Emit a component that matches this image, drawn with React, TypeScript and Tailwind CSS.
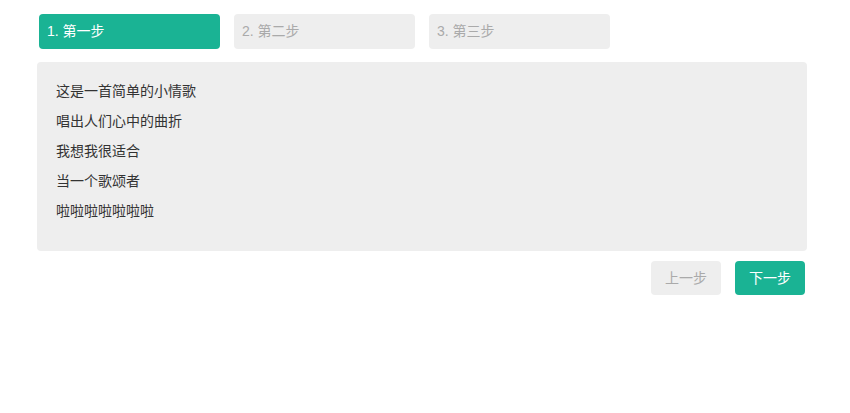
import React from "react";

export default function App() {
  const steps = ["1. 第一步", "2. 第二步", "3. 第三步"];
  const lines = ["这是一首简单的小情歌", "唱出人们心中的曲折", "我想我很适合", "当一个歌颂者", "啦啦啦啦啦啦啦"];
  return (
    <div
      className="w-[850px] h-[413px] bg-white text-[14px] text-[#333]"
      style={{ fontFamily: '"Liberation Sans", "Noto Sans CJK SC", sans-serif' }}
    >
      <div className="pt-[14px] pl-[37px] w-[807px]">
        <div className="flex gap-[14px] pl-[2px]">
          {steps.map((s, i) => (
            <div
              key={s}
              className={`w-[181px] h-[35px] rounded-[4px] flex items-center pl-[8px] ${
                i === 0 ? "bg-[#1ab394] text-white" : "bg-[#eeeeee] text-[#aaaaaa]"
              }`}
            >
              {s}
            </div>
          ))}
        </div>
        <div className="mt-[13px] w-[770px] h-[189px] bg-[#eeeeee] rounded-[4px] pl-[19px] pt-[14px]">
          {lines.map((l) => (
            <div key={l} className="h-[30px] leading-[30px]">
              {l}
            </div>
          ))}
        </div>
        <div className="mt-[10px] flex justify-end gap-[14px] pr-[2px]">
          <div className="w-[70px] h-[34px] rounded-[4px] bg-[#eeeeee] text-[#aaaaaa] flex items-center justify-center">
            上一步
          </div>
          <div className="w-[70px] h-[34px] rounded-[4px] bg-[#1ab394] text-white flex items-center justify-center">
            下一步
          </div>
        </div>
      </div>
    </div>
  );
}
